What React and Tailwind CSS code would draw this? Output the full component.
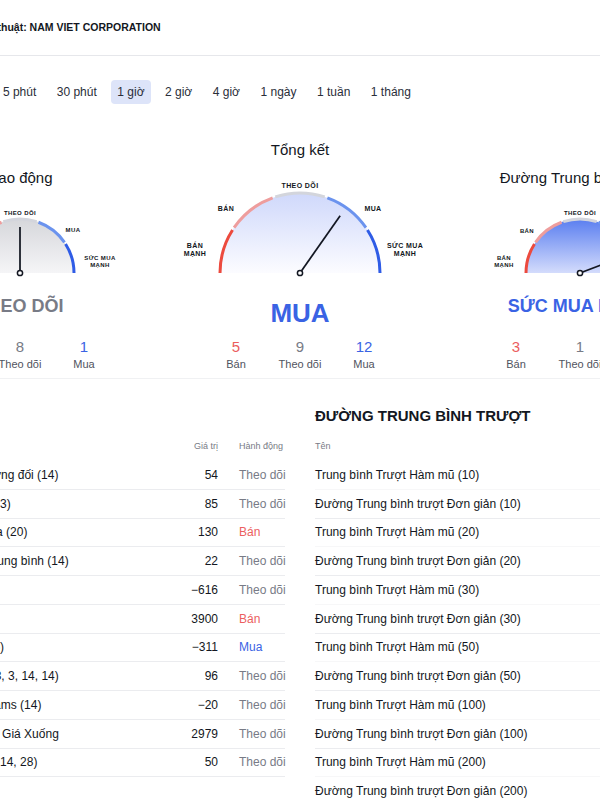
import React from "react";

const COLORS = {
  strongSell: "#ec4a3e",
  sell: "#ee9d9d",
  neutral: "#d3d5dc",
  buy: "#6b93ee",
  strongBuy: "#2f5ce6",
};

const rad = (d) => (d * Math.PI) / 180;
const pt = (cx, cy, r, deg) => [cx + r * Math.cos(rad(deg)), cy - r * Math.sin(rad(deg))];

function arcPath(cx, cy, r, a1, a2) {
  const [x1, y1] = pt(cx, cy, r, a1);
  const [x2, y2] = pt(cx, cy, r, a2);
  return `M${x1} ${y1} A${r} ${r} 0 0 1 ${x2} ${y2}`;
}

const segments = [
  [180, 147.5, COLORS.strongSell],
  [145.5, 110, COLORS.sell],
  [108, 72, COLORS.neutral],
  [70, 34.5, COLORS.buy],
  [32.5, 0, COLORS.strongBuy],
];

const labelsBig = [
  ["THEO DÕI", 0, -88],
  ["BÁN", -74, -65],
  ["MUA", 73, -65],
  ["BÁN", -105, -28],
  ["MẠNH", -105, -20],
  ["SỨC MUA", 105, -28],
  ["MẠNH", 105, -20],
];

const labelsSmall = [
  ["THEO DÕI", 0, -60],
  ["BÁN", -53, -42],
  ["MUA", 53, -43],
  ["BÁN", -76, -15],
  ["MẠNH", -76, -8],
  ["SỨC MUA", 80, -15],
  ["MẠNH", 80, -8],
];

function Gauge({ big, angle, fill, id }) {
  const h = big ? 104 : 84;
  const cx = 140;
  const cy = big ? 97 : 77;
  const r = big ? 80 : 54;
  const len = big ? 70 : 46;
  const fs = big ? 7 : 6;
  const labels = big ? labelsBig : labelsSmall;
  const [nx, ny] = pt(cx, cy, len, angle);

  return (
    <svg width="280" height={h} viewBox={`0 0 280 ${h}`}>
      <defs>
        <linearGradient id={id} x1="0" y1="0" x2="0" y2="1">
          <stop offset="0" stopColor={fill[0]} />
          <stop offset="1" stopColor={fill[1]} />
        </linearGradient>
      </defs>
      <path d={`M${cx - r} ${cy} A${r} ${r} 0 0 1 ${cx + r} ${cy} Z`} fill={`url(#${id})`} />
      {segments.map(([a1, a2, c]) => (
        <path key={a1} d={arcPath(cx, cy, r, a1, a2)} stroke={c} strokeWidth="3" fill="none" />
      ))}
      {labels.map(([t, dx, dy], i) => (
        <text
          key={i}
          x={cx + dx}
          y={cy + dy}
          textAnchor="middle"
          dominantBaseline="central"
          fontSize={fs}
          fontWeight="700"
          letterSpacing="0.4"
          fill="#131722"
        >
          {t}
        </text>
      ))}
      <line x1={cx} y1={cy} x2={nx} y2={ny} stroke="#131722" strokeWidth="1.75" />
      <circle cx={cx} cy={cy} r="2.6" fill="#fff" stroke="#131722" strokeWidth="1.5" />
    </svg>
  );
}

function Counts({ sell, neutral, buy }) {
  const items = [
    [sell, "Bán", "text-[#eb5d5d]"],
    [neutral, "Theo dõi", "text-[#787b86]"],
    [buy, "Mua", "text-[#3a63e4]"],
  ];
  return (
    <div className="flex">
      {items.map(([n, label, color]) => (
        <div key={label} className="w-[64px] flex flex-col items-center">
          <div className={`text-[15px] leading-[20px] ${color}`}>{n}</div>
          <div className="text-[11px] leading-[14px] text-[#50535e]">{label}</div>
        </div>
      ))}
    </div>
  );
}

const tabs = ["1 phút", "5 phút", "30 phút", "1 giờ", "2 giờ", "4 giờ", "1 ngày", "1 tuần", "1 tháng"];

const oscillators = [
  ["Chỉ số Sức mạnh Tương đối (14)", "54", "Theo dõi"],
  ["Stochastic %K (14, 3, 3)", "85", "Theo dõi"],
  ["Chỉ số Kênh Hàng hóa (20)", "130", "Bán"],
  ["Chỉ số Định hướng Trung bình (14)", "22", "Theo dõi"],
  ["Awesome Oscillator", "−616", "Theo dõi"],
  ["Xung lượng (10)", "3900", "Bán"],
  ["Cấp độ MACD (12, 26)", "−311", "Mua"],
  ["Stochastic RSI Fast (3, 3, 14, 14)", "96", "Theo dõi"],
  ["Vùng Phần trăm Williams (14)", "−20", "Theo dõi"],
  ["Sức mạnh Giá Lên và Giá Xuống", "2979", "Theo dõi"],
  ["Ultimate Oscillator (7, 14, 28)", "50", "Theo dõi"],
];

const movingAverages = [
  ["Trung bình Trượt Hàm mũ (10)", "74680", "Mua"],
  ["Đường Trung bình trượt Đơn giản (10)", "74540", "Mua"],
  ["Trung bình Trượt Hàm mũ (20)", "73990", "Mua"],
  ["Đường Trung bình trượt Đơn giản (20)", "73810", "Mua"],
  ["Trung bình Trượt Hàm mũ (30)", "73620", "Mua"],
  ["Đường Trung bình trượt Đơn giản (30)", "73450", "Mua"],
  ["Trung bình Trượt Hàm mũ (50)", "73270", "Mua"],
  ["Đường Trung bình trượt Đơn giản (50)", "73110", "Mua"],
  ["Trung bình Trượt Hàm mũ (100)", "73890", "Mua"],
  ["Đường Trung bình trượt Đơn giản (100)", "75120", "Bán"],
  ["Trung bình Trượt Hàm mũ (200)", "75560", "Bán"],
  ["Đường Trung bình trượt Đơn giản (200)", "76030", "Bán"],
];

const actionColor = {
  "Theo dõi": "text-[#787b86]",
  Bán: "text-[#ec5f5f]",
  Mua: "text-[#3a63e4]",
};

function Table({ title, rows, firstCol, alternate }) {
  return (
    <div className="flex flex-col">
      <div className="mt-[27px] h-[20px] text-[15px] leading-[20px] font-bold text-[#131722] whitespace-nowrap">
        {title}
      </div>
      <div className="mt-[6px] h-[29px] flex items-center text-[9px] text-[#787b86]">
        <div className="flex-1">{firstCol}</div>
        <div className="w-[70px] text-right">Giá trị</div>
        <div className="w-[67px] pl-[21px] whitespace-nowrap">Hành động</div>
      </div>
      {rows.map(([name, value, action], i) => (
        <div
          key={name}
          className={`h-[28.75px] flex items-center text-[12px] border-b ${
            alternate && i % 2 === 0 ? "border-[#f7f7f8]" : "border-[#ebecef]"
          }`}
        >
          <div className="flex-1 min-w-0 whitespace-nowrap text-[#131722]">{name}</div>
          <div className="w-[70px] text-right text-[#131722]">{value}</div>
          <div className={`w-[67px] pl-[21px] whitespace-nowrap ${actionColor[action]}`}>{action}</div>
        </div>
      ))}
    </div>
  );
}

export default function App() {
  return (
    <div className="w-[600px] h-[800px] overflow-hidden bg-white font-[family-name:'Liberation_Sans',Arial,sans-serif]">
      <div className="w-[880px] -ml-[140px]">
        <div className="h-[56px] pl-[71px] flex items-center border-b border-[#e6e7eb]">
          <span className="text-[10.5px] font-bold text-[#131722]">
            Phân tích Kỹ thuật: NAM VIET CORPORATION
          </span>
        </div>

        <div className="mt-[24px] pl-[83px] flex gap-[8.5px]">
          {tabs.map((t) => (
            <div
              key={t}
              className={`h-[24px] px-[6px] rounded-[4px] text-[12px] leading-[24px] whitespace-nowrap text-[#2a2e39] ${
                t === "1 giờ" ? "bg-[#dde4f9]" : ""
              }`}
            >
              {t}
            </div>
          ))}
        </div>

        <div className="mt-[34px] px-[20px] grid grid-cols-3 items-end pb-[7px] border-b border-[#f0f1f3]">
          <div className="flex flex-col items-center">
            <div className="h-[24px] text-[15px] leading-[24px] text-[#131722]">Dao động</div>
            <div className="mt-[6px]">
              <Gauge angle={90} fill={["#d6d7db", "#f5f5f7"]} id="g-osc" />
            </div>
            <div className="mt-[15px] h-[22px] text-[18px] leading-[22px] font-bold text-[#787b86]">THEO DÕI</div>
            <div className="mt-[20px]">
              <Counts sell={2} neutral={8} buy={1} />
            </div>
          </div>

          <div className="flex flex-col items-center">
            <div className="h-[24px] text-[15px] leading-[24px] text-[#131722]">Tổng kết</div>
            <div className="mt-[14px]">
              <Gauge big angle={55} fill={["#cfd8fb", "#fcfcff"]} id="g-sum" />
            </div>
            <div className="mt-[18px] h-[30px] text-[26px] leading-[30px] font-bold text-[#3a63e4]">MUA</div>
            <div className="mt-[9px]">
              <Counts sell={5} neutral={9} buy={12} />
            </div>
          </div>

          <div className="flex flex-col items-center">
            <div className="h-[24px] text-[15px] leading-[24px] text-[#131722] whitespace-nowrap">
              Đường Trung bình trượt
            </div>
            <div className="mt-[6px]">
              <Gauge angle={21} fill={["#5a7ef0", "#d4dcfc"]} id="g-ma" />
            </div>
            <div className="mt-[15px] h-[22px] text-[18px] leading-[22px] font-bold text-[#3a63e4] whitespace-nowrap">
              SỨC MUA MẠNH
            </div>
            <div className="mt-[20px]">
              <Counts sell={3} neutral={1} buy={11} />
            </div>
          </div>
        </div>

        <div className="px-[22px] grid grid-cols-2 gap-[30px]">
          <Table title="DAO ĐỘNG" rows={oscillators} firstCol="Tên" />
          <Table title="ĐƯỜNG TRUNG BÌNH TRƯỢT" rows={movingAverages} firstCol="Tên" alternate />
        </div>
      </div>
    </div>
  );
}
